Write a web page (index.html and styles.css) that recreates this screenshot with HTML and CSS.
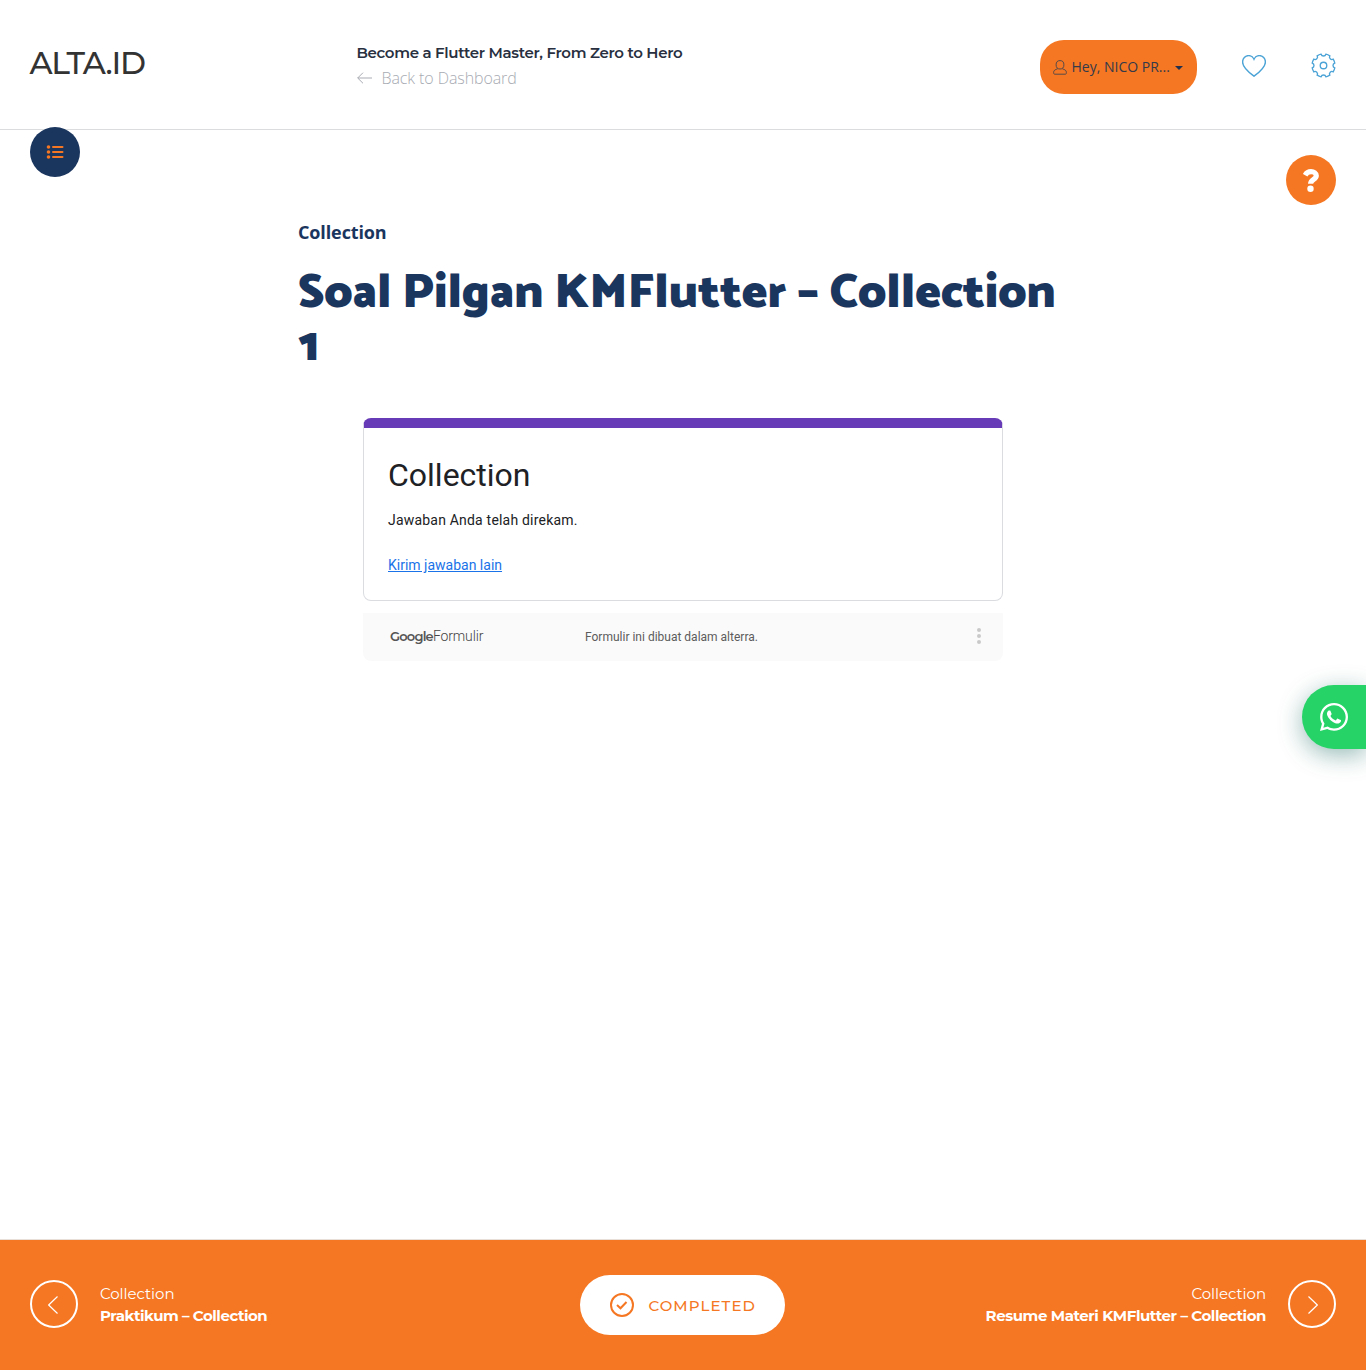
FILE: index.html
```html
<!DOCTYPE html>
<html lang="id">
<head>
<meta charset="utf-8">
<title>Soal Pilgan KMFlutter – Collection 1</title>
<link rel="stylesheet" href="styles.css">
</head>
<body>
<header class="topbar">
  <a class="brand">ALTA.ID</a>
  <div class="course">
    <div class="course-name">Become a Flutter Master, From Zero to Hero</div>
    <a class="back"><svg width="15" height="12" viewBox="0 0 15 12"><path d="M6 .7.7 6 6 11.3M.7 6H15"/></svg><span>Back to Dashboard</span></a>
  </div>
  <div class="tools">
    <button class="user"><svg class="user-icon" width="14" height="15" viewBox="0 0 14 15"><ellipse cx="7" cy="4.8" rx="3.9" ry="4.2"/><path d="M4.600 8.800C2 9.600.6 10.500.6 12.600c0 1.200.4 1.600 1.200 1.600h10.400c.8 0 1.200-.4 1.200-1.600 0-2.100-1.400-3-4-3.800"/></svg><span class="user-name">Hey, NICO PR...</span><i class="caret"></i></button>
    <svg class="line-icon heart" width="24" height="22" viewBox="0 0 24 22"><path d="M12 4.300C10.900 1.900 9.100.6 6.700.6 3.100.6.600 3.300.600 7c0 5.800 6.600 10.600 11.400 14.200C16.800 17.600 23.400 12.800 23.400 7c0-3.700-2.500-6.400-6.100-6.400-2.400 0-4.200 1.300-5.300 3.700z"/></svg>
    <svg class="line-icon gear" width="25" height="25" viewBox="-13 -13 26 26"><path d="M11.740 2.490A12 12 0 0 1 10.060 6.540A2.600 2.600 0 0 0 6.540 10.060A12 12 0 0 1 2.490 11.740A2.600 2.600 0 0 0-2.490 11.740A12 12 0 0 1-6.540 10.060A2.600 2.600 0 0 0-10.060 6.540A12 12 0 0 1-11.740 2.490A2.600 2.600 0 0 0-11.740-2.490A12 12 0 0 1-10.060-6.540A2.600 2.600 0 0 0-6.540-10.060A12 12 0 0 1-2.490-11.740A2.600 2.600 0 0 0 2.490-11.740A12 12 0 0 1 6.540-10.060A2.600 2.600 0 0 0 10.060-6.540A12 12 0 0 1 11.740-2.490A2.600 2.600 0 0 0 11.740 2.490z"/><circle r="3.400"/></svg>
  </div>
</header>
<button class="round toc" aria-label="Menu"><svg width="18" height="14" viewBox="0 0 18 14"><g fill="currentColor"><circle cx="2.500" cy="2" r="1.800"/><circle cx="2.500" cy="7" r="1.800"/><circle cx="2.500" cy="12" r="1.800"/></g><path d="M7 2h9.500M7 7h9.500M7 12h9.500" stroke="currentColor" stroke-width="2" stroke-linecap="round"/></svg></button>
<button class="round help" aria-label="Help"><svg width="16" height="23" viewBox="0 0 16 23" stroke="currentColor"><path d="M2.100 6.200C3.400 3.800 5.300 2.700 8 2.700c3 0 5.300 1.500 5.300 4 0 3.700-5.600 3.700-5.700 8" stroke-width="5.200"/><circle cx="7.500" cy="19.700" r="3.200" fill="currentColor" stroke="none"/></svg></button>
<main class="lesson">
  <div class="section-name">Collection</div>
  <h1>Soal Pilgan KMFlutter – Collection 1</h1>
  <section class="form">
    <div class="card">
      <h2>Collection</h2>
      <p>Jawaban Anda telah direkam.</p>
      <a class="again">Kirim jawaban lain</a>
    </div>
    <div class="form-foot">
      <div class="forms-logo"><b>Google</b><span>Formulir</span></div>
      <div class="origin">Formulir ini dibuat dalam alterra.</div>
      <svg class="dots" width="4" height="16" viewBox="0 0 4 16"><circle cx="2" cy="2" r="2"/><circle cx="2" cy="8" r="2"/><circle cx="2" cy="14" r="2"/></svg>
    </div>
  </section>
</main>
<a class="whatsapp" aria-label="WhatsApp"><svg width="28" height="28" viewBox="0 32 448 448"><path fill="currentColor" d="M380.900 97.100C339 55.100 283.200 32 223.900 32c-122.400 0-222 99.600-222 222 0 39.100 10.200 77.300 29.600 111L0 480l117.700-30.900c32.400 17.700 68.900 27 106.100 27h.1c122.300 0 224.100-99.600 224.100-222 0-59.300-25.200-115-67.100-157zm-157 341.600c-33.200 0-65.700-8.900-94-25.700l-6.700-4-69.800 18.300L72 359.200l-4.400-7c-18.500-29.400-28.200-63.300-28.200-98.200 0-101.700 82.800-184.500 184.600-184.500 49.300 0 95.600 19.200 130.400 54.100 34.800 34.900 56.200 81.200 56.100 130.500 0 101.800-84.900 184.600-186.600 184.600zm101.200-138.200c-5.500-2.800-32.800-16.200-37.900-18-5.100-1.900-8.800-2.800-12.500 2.800-3.700 5.600-14.300 18-17.600 21.800-3.200 3.700-6.500 4.200-12 1.400-32.600-16.300-54-29.100-75.500-66-5.700-9.800 5.700-9.100 16.300-30.300 1.800-3.700.9-6.900-.5-9.700-1.400-2.800-12.500-30.100-17.100-41.200-4.500-10.800-9.100-9.300-12.500-9.500-3.200-.2-6.900-.2-10.600-.2-3.700 0-9.700 1.400-14.800 6.900-5.100 5.600-19.400 19-19.400 46.300 0 27.300 19.900 53.700 22.600 57.400 2.800 3.700 39.100 59.700 94.800 83.800 35.200 15.200 49 16.500 66.600 13.900 10.700-1.600 32.800-13.400 37.400-26.400 4.600-13 4.600-24.100 3.200-26.400-1.300-2.500-5-3.900-10.500-6.600z"/></svg></a>
<footer class="pager">
  <a class="step">
    <span class="ring"><svg width="10" height="18" viewBox="0 0 10 18"><path d="M9.500.5.700 9l8.800 8.500"/></svg></span>
    <span class="step-text"><span class="kind">Collection</span><b>Praktikum – Collection</b></span>
  </a>
  <button class="done"><svg width="24" height="24" viewBox="0 0 24 24"><circle cx="12" cy="12" r="11"/><path d="m7 12 3.500 3.300 6-6.300"/></svg><span>COMPLETED</span></button>
  <a class="step next">
    <span class="step-text"><span class="kind">Collection</span><b>Resume Materi KMFlutter – Collection</b></span>
    <span class="ring"><svg width="10" height="18" viewBox="0 0 10 18"><path d="m.5.5 8.800 8.500-8.800 8.500"/></svg></span>
  </a>
</footer>
</body>
</html>
```
FILE: styles.css
```css
* { box-sizing: border-box; }
body { margin: 0; height: 1370px; position: relative; display: flex; flex-direction: column; background: #fff; font-family: "Open Sans", sans-serif; overflow: hidden; }
button { border: 0; padding: 0; font: inherit; }
a { text-decoration: none; }
h1, h2, p { margin: 0; }
svg { flex: none; display: block; fill: none; }
span, b, h2, p, .course-name { white-space: nowrap; }

.topbar { height: 130px; flex: none; border-bottom: 1px solid #dadcdd; display: grid; grid-template-columns: 326.500px 1fr auto; padding: 0 30px; }
.brand { font: 500 31.500px/40px Montserrat, Inter, sans-serif; letter-spacing: -1.200px; color: #333; padding-top: 43px; margin-left: -.5px; }
.course { padding-top: 42px; }
.course-name { font: 600 15px/22px Montserrat, Inter, sans-serif; letter-spacing: -.33px; color: #28303f; }
.back { display: flex; align-items: center; gap: 10px; height: 28px; color: #a8abb3; font-size: 16px; font-weight: 300; letter-spacing: -.09px; }
.back svg { stroke: currentColor; }
.tools { display: flex; align-items: flex-start; padding-top: 40px; }
.user { width: 157px; height: 54px; border-radius: 24px; background: #f57723; color: #333a4a; display: flex; align-items: center; padding-left: 13px; font-size: 14px; margin-right: 45px; }
.user-name { margin-top: -2px; }
.user-icon { stroke: #564a49; stroke-width: 1; margin-right: 4.500px; }
.caret { border: 4px solid transparent; border-top-color: #22304f; border-bottom: 0; margin-left: 5.500px; margin-top: 2px; }
.line-icon { stroke: #4ba3d6; stroke-width: 1.400; }
.gear { margin-top: 13px; }
.heart { margin: 15px 45px 0 0; }

.round { position: absolute; width: 50px; height: 50px; border-radius: 50%; display: flex; align-items: center; justify-content: center; }
.toc { left: 30px; top: 127px; background: #1a355e; color: #f57723; }
.help { right: 30px; top: 155px; background: #f57723; color: #fff; }

.lesson { width: 770px; margin: 0 auto; padding-top: 90px; flex: 1; }
.section-name { font-size: 18px; font-weight: 700; line-height: 25px; letter-spacing: -.12px; color: #1a355e; }
h1 { font: 900 48px/52.800px Catamaran, "Noto Sans", sans-serif; color: #1a355e; margin-top: 23px; }
.form { width: 640px; margin: 44.400px auto 0; font-family: Roboto, sans-serif; }
.card { height: 183px; border: 1px solid #dadce0; border-top: 10px solid #673ab7; border-radius: 8px; padding: 26px 24px 0; }
.card h2 { font-size: 32px; font-weight: 400; line-height: 43px; color: #202124; }
.card p { font-size: 14px; line-height: 20px; letter-spacing: .2px; color: #202124; margin-top: 13px; }
.again { display: inline-block; font-size: 14px; line-height: 20px; color: #1a73e8; text-decoration: underline; margin-top: 25px; }
.form-foot { height: 48px; margin-top: 12px; background: #fafafa; border-radius: 0 0 8px 8px; display: grid; grid-template-columns: 195px 1fr auto; align-items: center; padding: 0 22px 0 27px; }
.dots { fill: #c9c9c9; margin-bottom: 2px; }
.forms-logo { font-size: 14px; font-weight: 300; color: #444; letter-spacing: -.12px; margin-top: -2px; }
.forms-logo b { font-family: Montserrat, Inter, sans-serif; font-size: 13px; font-weight: 600; letter-spacing: -.8px; color: #555; }
.origin { font-size: 12px; color: #5c5c5c; }

.whatsapp { position: absolute; right: 0; top: 685px; width: 64px; height: 64px; border-radius: 32px 0 0 32px; background: #25d366; color: #fff; display: flex; align-items: center; padding-left: 18px; box-shadow: 0 6px 24px rgba(7, 94, 84, .42); }

.pager { height: 131px; flex: none; background: #f57723; border-top: 1px solid #e8dfd8; color: #fff; display: grid; grid-template-columns: 550px 205px 1fr; align-items: center; padding: 0 30px 1px; font-family: Montserrat, Inter, sans-serif; font-size: 15px; }
.step { display: flex; gap: 22px; align-items: center; }
.next { justify-content: flex-end; text-align: right; }
.ring { width: 48px; height: 48px; margin-bottom: 2px; border: 2px solid #fff; border-radius: 50%; display: flex; align-items: center; justify-content: center; padding-top: 2px; }
.ring svg { stroke: #fff; stroke-width: 1.200; }
.next .ring { padding-left: 2px; }
.step:not(.next) .ring { padding-right: 2px; }
.step-text { display: flex; flex-direction: column; line-height: 22px; }
.kind { font-weight: 400; letter-spacing: -.05px; }
.step-text b { font-weight: 700; letter-spacing: -.47px; }
.next b { letter-spacing: -.44px; }
.done { height: 60px; border-radius: 30px; background: #fff; color: #f57723; display: flex; align-items: center; padding-left: 30px; gap: 14.500px; font-size: 15px; font-weight: 500; letter-spacing: 1.050px; }
.done span { padding-top: 2px; }
.done svg { stroke: currentColor; stroke-width: 2; }
```
